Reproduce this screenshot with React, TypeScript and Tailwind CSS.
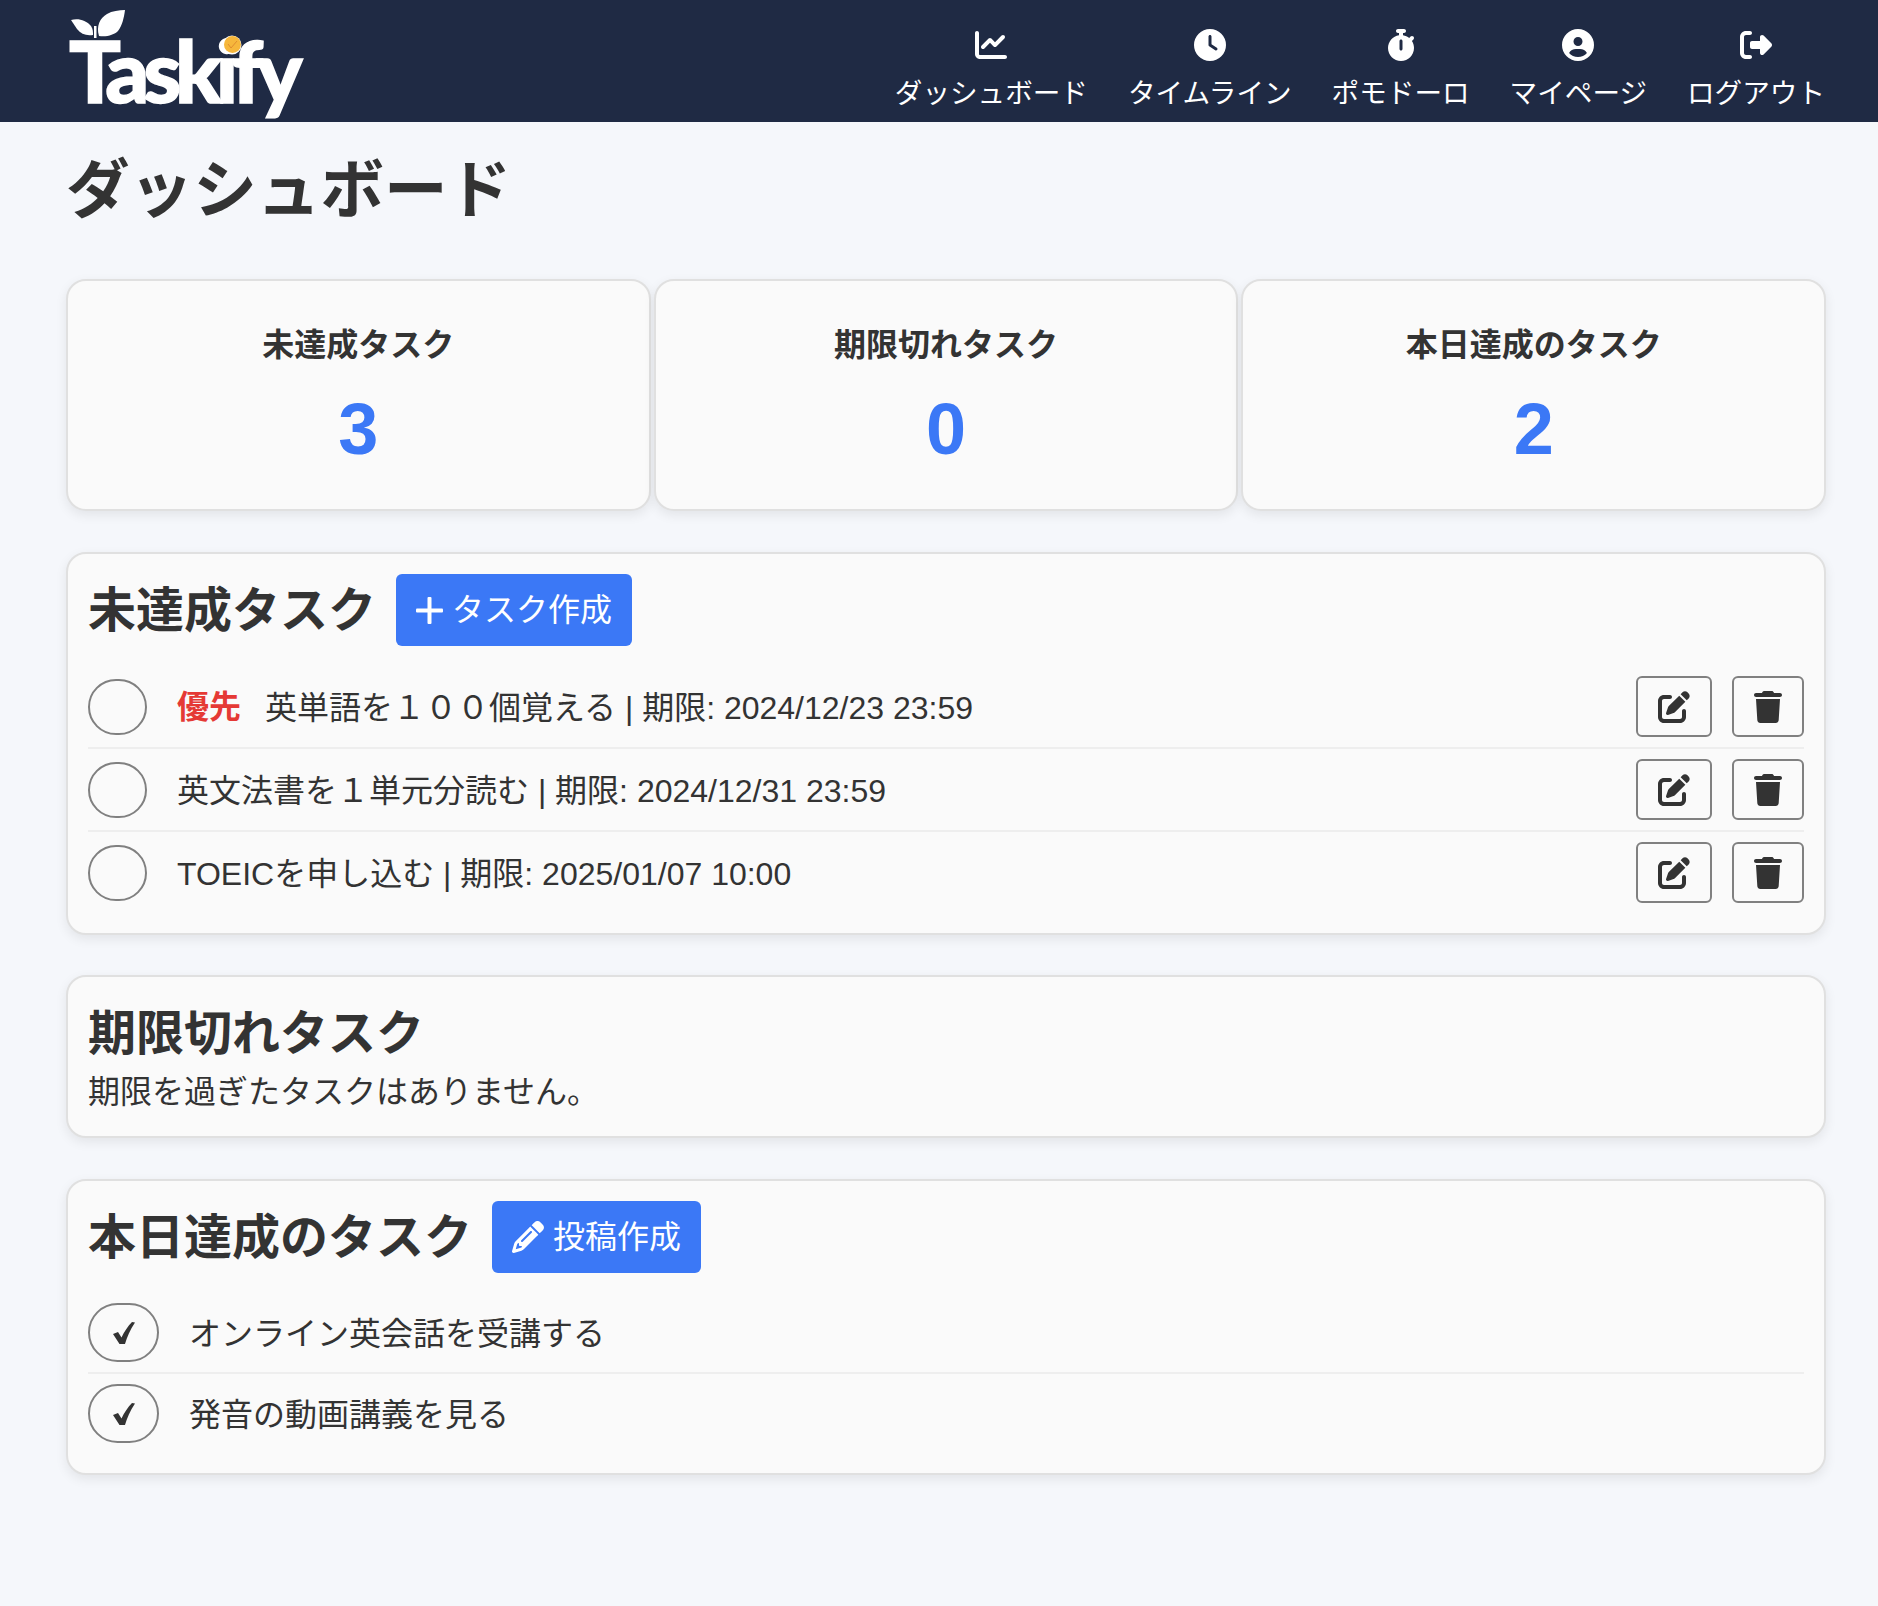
import { FaChartLine, FaClock, FaStopwatch, FaCircleUser, FaRightFromBracket, FaPenToSquare, FaTrash, FaPencil } from 'react-icons/fa6';

const navItems = [
  { icon: FaChartLine, label: 'ダッシュボード' },
  { icon: FaClock, label: 'タイムライン' },
  { icon: FaStopwatch, label: 'ポモドーロ' },
  { icon: FaCircleUser, label: 'マイページ' },
  { icon: FaRightFromBracket, label: 'ログアウト' },
];

const stats = [
  { label: '未達成タスク', value: 3 },
  { label: '期限切れタスク', value: 0 },
  { label: '本日達成のタスク', value: 2 },
];

const pending = [
  { priority: true, text: '英単語を１００個覚える | 期限: 2024/12/23 23:59' },
  { priority: false, text: '英文法書を１単元分読む | 期限: 2024/12/31 23:59' },
  { priority: false, text: 'TOEICを申し込む | 期限: 2025/01/07 10:00' },
];

const done = ['オンライン英会話を受講する', '発音の動画講義を見る'];

function Logo() {
  return (
    <div className="relative h-[122px] w-[240px]">
      <svg className="absolute left-0 top-[6px]" width="64" height="34" viewBox="70 6 64 34" fill="#fff">
        <path d="M71 20c7-2 15 0 20 6 2 3 2 6 2 9-7 1-12-1-16-6-2-3-4-6-6-9z" />
        <path d="M99 36c-3-10 1-18 8-22 5-3 12-4 18-4-1 8-3 16-7 21-4 4-11 6-19 5z" />
        <rect x="94" y="26" width="2.5" height="12" />
      </svg>
      <span className="absolute left-[-1px] top-[17px] font-['Lato',sans-serif] text-[86px] font-black leading-[105px] tracking-[-6.2px] text-white [-webkit-text-stroke:1.5px_white]">
        Taskify
      </span>
      <svg className="absolute left-[152px] top-[35px]" width="20" height="20" viewBox="0 0 20 20">
        <circle cx="10" cy="10" r="9.5" fill="#fff" />
        <circle cx="10.5" cy="9.5" r="8.5" fill="#f6b73c" />
        <path d="M6 9l3 4 6-7" fill="none" stroke="#d9822b" strokeWidth="0.8" />
      </svg>
    </div>
  );
}

function PlusMark() {
  return (
    <svg width="27" height="27" viewBox="0 0 27 27" fill="#fff">
      <rect x="0" y="11.5" width="27" height="4" rx="1" />
      <rect x="11.5" y="0" width="4" height="27" rx="1" />
    </svg>
  );
}

function CheckMark() {
  return (
    <svg width="24" height="24" viewBox="0 0 24 24" fill="#333">
      <path d="M1 13l5-2 3.5 5.5C12 11 16 5 20 1l3 .5C18 9 15 16 13 23H7.5z" />
    </svg>
  );
}

export default function App() {
  return (
    <div className="min-h-screen bg-[#f5f7fb] font-['Liberation_Sans','Noto_Sans_CJK_JP',sans-serif] text-[#333]">
      <header className="flex h-[122px] items-center justify-between bg-[#1f2a44] pl-[70px] pr-[53px]">
        <Logo />
        <nav className="mt-[22px] flex gap-[40px]">
          {navItems.map((item) => (
            <a key={item.label} className="flex flex-col items-center gap-[12px] text-[27.6px] leading-[42px] text-white">
              <item.icon size={32} />
              <span>{item.label}</span>
            </a>
          ))}
        </nav>
      </header>

      <main className="pl-[66px] pr-[52px]">
        <h1 className="mb-[41px] mt-[20px] text-[63.6px] font-bold leading-[96px]">ダッシュボード</h1>

        <div className="flex gap-[3px]">
          {stats.map((stat) => (
            <div
              key={stat.label}
              className="flex h-[232px] flex-1 flex-col items-center rounded-[20px] border-2 border-[#e0e0e0] bg-[#fafafa] pt-[40px] shadow-[0_4px_12px_rgba(0,0,0,0.08)]"
            >
              <h3 className="text-[32px] font-bold leading-[48px]">{stat.label}</h3>
              <p className="mt-[12px] text-[72px] font-bold leading-[96px] text-[#3b78f6]">{stat.value}</p>
            </div>
          ))}
        </div>

        <section className="mt-[41px] rounded-[20px] border-2 border-[#e0e0e0] bg-[#fafafa] p-[20px] shadow-[0_4px_12px_rgba(0,0,0,0.08)]">
          <div className="mb-[20px] flex items-center gap-[20px]">
            <h2 className="pt-[1px] text-[48px] font-bold leading-[71px]">未達成タスク</h2>
            <button className="flex h-[72px] items-center gap-[9px] rounded-[6px] bg-[#3b78f6] px-[20px] text-[32px] text-white">
              <PlusMark />
              <span className="pb-[1px]">タスク作成</span>
            </button>
          </div>
          <ul>
            {pending.map((task, index) => (
              <li
                key={task.text}
                className={`flex items-center py-[10px] ${index < pending.length - 1 ? 'border-b-2 border-[#eeeeee]' : ''}`}
              >
                <button className="mr-[30px] h-[56px] w-[59px] rounded-full border-2 border-[#808080]" />
                {task.priority && <span className="mr-[24px] pt-[1px] text-[32px] font-bold text-[#e53935]">優先</span>}
                <span className="flex-1 pt-[2px] text-[32px] leading-[48px]">{task.text}</span>
                <button className="flex h-[61px] w-[76px] items-center justify-center rounded-[6px] border-2 border-[#808080]">
                  <FaPenToSquare size={32} />
                </button>
                <button className="ml-[20px] flex h-[61px] w-[72px] items-center justify-center rounded-[6px] border-2 border-[#808080]">
                  <FaTrash size={32} />
                </button>
              </li>
            ))}
          </ul>
        </section>

        <section className="mt-[40px] rounded-[20px] border-2 border-[#e0e0e0] bg-[#fafafa] p-[20px] shadow-[0_4px_12px_rgba(0,0,0,0.08)]">
          <h2 className="pt-[1px] text-[48px] font-bold leading-[71px]">期限切れタスク</h2>
          <p className="text-[32px] leading-[47px]">期限を過ぎたタスクはありません。</p>
        </section>

        <section className="mt-[41px] rounded-[20px] border-2 border-[#e0e0e0] bg-[#fafafa] p-[20px] shadow-[0_4px_12px_rgba(0,0,0,0.08)]">
          <div className="mb-[20px] flex items-center gap-[20px]">
            <h2 className="pt-[1px] text-[48px] font-bold leading-[71px]">本日達成のタスク</h2>
            <button className="flex h-[72px] items-center gap-[9px] rounded-[6px] bg-[#3b78f6] px-[20px] text-[32px] text-white">
              <FaPencil size={32} />
              <span className="pb-[1px]">投稿作成</span>
            </button>
          </div>
          <ul>
            {done.map((task, index) => (
              <li
                key={task}
                className={`flex items-center py-[10px] ${index < done.length - 1 ? 'border-b-2 border-[#eeeeee]' : ''}`}
              >
                <button className="mr-[30px] flex h-[59px] w-[71px] items-center justify-center rounded-full border-2 border-[#808080]">
                  <CheckMark />
                </button>
                <span className="pt-[4px] text-[32px] leading-[39px]">{task}</span>
              </li>
            ))}
          </ul>
        </section>
      </main>
    </div>
  );
}
